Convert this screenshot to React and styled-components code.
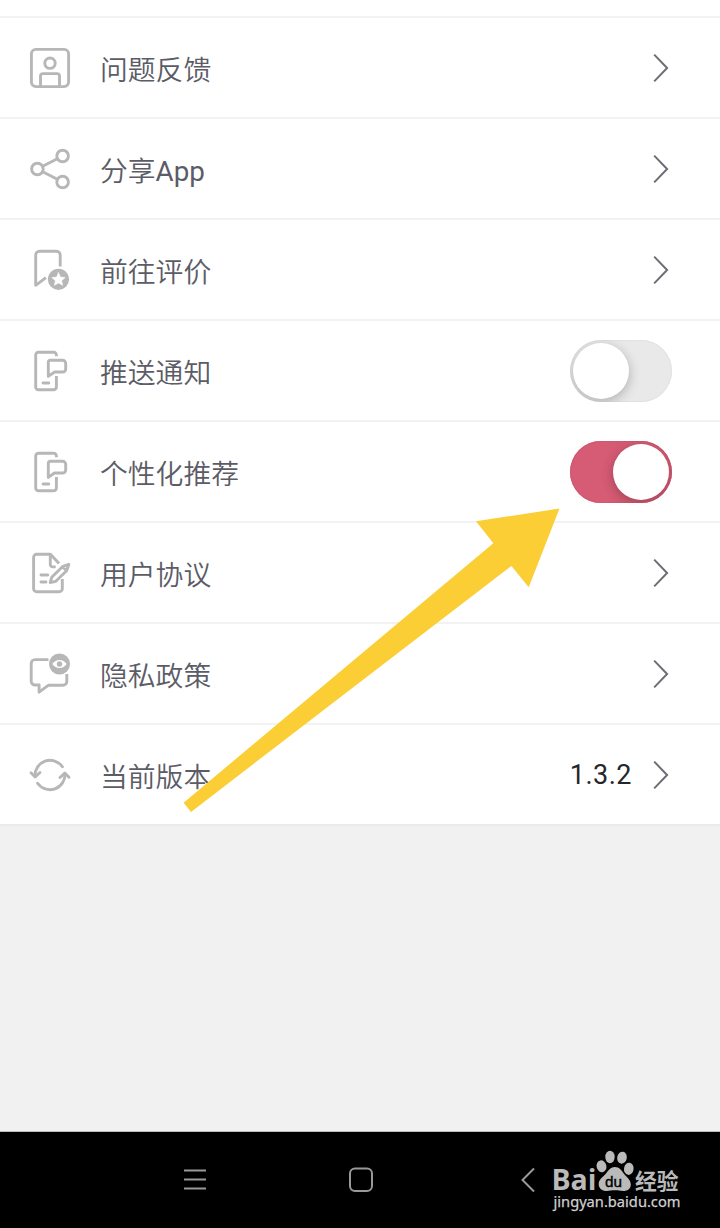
import React from "react";
import styled, { createGlobalStyle } from "styled-components";

const GlobalStyle = createGlobalStyle`
  body { margin: 0; background: #f1f1f1; }
  * { box-sizing: border-box; }
`;

const Screen = styled.div`
  position: relative;
  display: flex;
  flex-direction: column;
  width: 720px;
  height: 1228px;
  overflow: hidden;
  background: #f1f1f1;
  font-family: "Noto Sans CJK SC", sans-serif;
`;

const PreviousRow = styled.div`
  height: 18px;
  background: #fff;
  border-bottom: 2px solid #f2f2f2;
`;

const List = styled.main`
  display: flex;
  flex-direction: column;
`;

const Row = styled.div`
  display: flex;
  align-items: center;
  height: 101px;
  padding: 1px 48px 0 30px;
  background: #fff;
  border-bottom: 2px solid #f2f2f2;

  &:last-child {
    border-bottom-color: #ebebeb;
  }
`;

const RowIcon = styled.svg`
  width: 40px;
  height: 40px;
  overflow: visible;
  fill: none;
  stroke: #b7b7b7;
  stroke-width: 2.9;
  stroke-linecap: round;
  stroke-linejoin: round;
`;

const Label = styled.span`
  flex: 1;
  height: 40px;
  margin: 0 0 0 30px;
  font-size: 27.8px;
  line-height: 40px;
  font-weight: 350;
  color: #5b5c66;
`;

const Latin = styled.span`
  font-family: Roboto, sans-serif;
  font-weight: 400;
  line-height: 1;
`;

const Version = styled.span`
  margin-right: 21px;
  font: 400 27px/40px Roboto, sans-serif;
  letter-spacing: 0.5px;
  color: #25262b;
`;

const Chevron = styled.svg`
  width: 16px;
  height: 30px;
  margin: 0 3px 1px 0;
  fill: none;
  stroke: #6c6d75;
  stroke-width: 2;
`;

const Switch = styled.div`
  display: flex;
  align-items: center;
  justify-content: ${(p) => (p.$on ? "flex-end" : "flex-start")};
  width: 102px;
  height: 62px;
  padding: 0 3px;
  border-radius: 31px;
  overflow: hidden;
  background: ${(p) => (p.$on ? "#d65b74" : "#e9e9e9")};
  box-shadow: inset 0 0 0 1px ${(p) => (p.$on ? "#cf5870" : "#e2e2e2")};
`;

const Thumb = styled.div`
  width: 56px;
  height: 56px;
  border-radius: 50%;
  background: #fff;
  box-shadow: 0 3px 12px rgba(0, 0, 0, 0.26);
`;

const NavBar = styled.nav`
  display: flex;
  align-items: center;
  height: 97px;
  margin-top: auto;
  padding-left: 183px;
  border-top: 1px solid #b9bcbc;
  background: #000;
`;

const NavIcon = styled.svg`
  width: ${(p) => p.$w}px;
  height: 26px;
  margin-right: ${(p) => p.$gap || 0}px;
  fill: none;
  stroke: #999;
  stroke-width: 2;
`;

const Pointer = styled.svg`
  position: absolute;
  left: 183px;
  top: 508px;
  width: 378px;
  height: 305px;
  fill: #fbce35;
`;

const Watermark = styled.svg`
  position: absolute;
  left: 550px;
  top: 1148px;
  width: 134px;
  height: 68px;
  fill: #bababa;
`;

const PhoneIcon = () => (
  <RowIcon viewBox="0 0 40 40">
    <path d="M26.4 5.3V4a2.8 2.8 0 0 0-2.8-2.8H8.5A2.8 2.8 0 0 0 5.7 4v32a2.8 2.8 0 0 0 2.8 2.8h15.1a2.8 2.8 0 0 0 2.8-2.8V25" strokeLinecap="butt" />
    <path d="M20.200 9.300h12.500a3 3 0 0 1 3 3V18a3 3 0 0 1-3 3h-8.200l-6.200 4.400V11.200a1.900 1.900 0 0 1 1.900-1.900z" />
    <path d="M13 32h5.800" />
  </RowIcon>
);

const icons = {
  feedback: (
    <RowIcon viewBox="0 0 40 40">
      <rect x="1.4" y="1.4" width="37.2" height="37.2" rx="4.5" />
      <circle cx="20" cy="15.2" r="5.2" />
      <path d="M10.5 38V27.8a2.2 2.2 0 0 1 2.2-2.2h14.6a2.2 2.2 0 0 1 2.2 2.2V38" />
    </RowIcon>
  ),
  share: (
    <RowIcon viewBox="0 0 40 40">
      <circle cx="32.6" cy="7" r="5.8" />
      <circle cx="7.4" cy="20" r="5.8" />
      <circle cx="32.6" cy="33" r="5.8" />
      <path d="M12.7 17.3 27.3 9.7M12.7 22.7l14.6 7.6" />
    </RowIcon>
  ),
  rate: (
    <RowIcon viewBox="0 0 40 40">
      <path d="M30.2 16.5V5a3.8 3.8 0 0 0-3.8-3.8H9.5A3.8 3.8 0 0 0 5.7 5v30.3l10.2-7.6" strokeLinecap="butt" />
      <circle cx="28.5" cy="29.3" r="10.6" fill="#b7b7b7" stroke="none" />
      <path d="m28.5 22.8 1.9 4.3 4.7.5-3.5 3.1 1 4.6-4.1-2.4-4.1 2.4 1-4.6-3.5-3.1 4.7-.5z" fill="#fff" stroke="#fff" strokeWidth=".6" />
    </RowIcon>
  ),
  phone: <PhoneIcon />,
  agreement: (
    <RowIcon viewBox="0 0 40 40">
      <path d="M29 10.5 20.5 1.3H6.6a3 3 0 0 0-3 3v31.4a3 3 0 0 0 3 3h22.7a3 3 0 0 0 3-3V26" strokeLinecap="butt" />
      <path d="M20.3 2v9.5a2.4 2.4 0 0 0 2.4 2.4h3" strokeLinecap="butt" />
      <path d="m20.2 29.5 1.5-5.2 10.7-10.6 6.4-2.3-2.2 6.3L25.8 28.3zM32.4 13.7l4.2 4" />
      <path d="M11 22h6.8M11 29h5" />
    </RowIcon>
  ),
  privacy: (
    <RowIcon viewBox="0 0 40 40">
      <path d="M18.500 5.600H5A3.800 3.800 0 0 0 1.200 9.400v17.800A3.800 3.800 0 0 0 5 31h4.100v7.200l9.500-7H33a3.800 3.800 0 0 0 3.800-3.800v-7.500" strokeLinecap="butt" />
      <circle cx="29.5" cy="10" r="10.5" fill="#b7b7b7" stroke="none" />
      <path d="M22.3 10c3.7-5.2 10.7-5.2 14.4 0-3.7 5.2-10.7 5.2-14.4 0z" fill="#fff" stroke="none" />
      <circle cx="29.5" cy="10" r="2.7" fill="#b7b7b7" stroke="none" />
    </RowIcon>
  ),
  version: (
    <RowIcon viewBox="0 0 40 40">
      <path d="M32.4 11.8A15 15 0 0 0 5.1 21.4M7.6 28.2A15 15 0 0 0 34.9 18.6" />
      <path d="m1 17.7 4.2 4.2 4.8-4.4M39 22.3l-4.2-4.2-4.8 4.4" />
    </RowIcon>
  ),
};

const rows = [
  { icon: "feedback", label: "问题反馈" },
  { icon: "share", label: <>分享<Latin>App</Latin></> },
  { icon: "rate", label: "前往评价" },
  { icon: "phone", label: "推送通知", toggle: true, on: false },
  { icon: "phone", label: "个性化推荐", toggle: true, on: true },
  { icon: "agreement", label: "用户协议" },
  { icon: "privacy", label: "隐私政策" },
  { icon: "version", label: "当前版本", value: "1.3.2" },
];

export default function App() {
  return (
    <Screen>
      <GlobalStyle />
      <PreviousRow />
      <List>
        {rows.map((row, i) => (
          <Row key={i}>
            {icons[row.icon]}
            <Label>{row.label}</Label>
            {row.value && <Version>{row.value}</Version>}
            {row.toggle ? (
              <Switch $on={row.on} role="switch" aria-checked={row.on}>
                <Thumb />
              </Switch>
            ) : (
              <Chevron viewBox="0 0 16 30">
                <path d="m1.2 1.6 12.9 13.4L1.2 28.4" />
              </Chevron>
            )}
          </Row>
        ))}
      </List>
      <NavBar>
        <NavIcon $w={24} $gap={141} viewBox="0 0 24 26">
          <path d="M1 3.5h22M1 12.5h22M1 21.5h22" />
        </NavIcon>
        <NavIcon $w={26} $gap={146} viewBox="0 0 26 26">
          <rect x="2" y="1.5" width="22" height="22.5" rx="5" />
        </NavIcon>
        <NavIcon $w={16} viewBox="0 0 16 26">
          <path d="M14 1.5 2.5 13 14 24.5" />
        </NavIcon>
      </NavBar>
      <Pointer viewBox="183 508 378 305">
        <path d="M559.5 508.5 476 521.3l17.3 21.9L183.6 802.7l7.4 9.2 320.5-246 17.2 21.3z" />
      </Pointer>
      <Watermark viewBox="550 1148 134 68">
        <text x="551.5" y="1190" fontFamily="Open Sans, sans-serif" fontWeight="700" fontSize="28.5" textLength="45" lengthAdjust="spacingAndGlyphs">Bai</text>
        <ellipse cx="601.5" cy="1166.3" rx="4.9" ry="6" transform="rotate(-12 601.5 1166.3)" />
        <ellipse cx="610" cy="1157" rx="4.7" ry="6.2" />
        <ellipse cx="622" cy="1157.7" rx="4.8" ry="6" transform="rotate(12 622 1157.7)" />
        <ellipse cx="628.8" cy="1168.8" rx="4.8" ry="6.1" transform="rotate(8 628.8 1168.8)" />
        <path d="M615 1167c4 0 6.5 3 8.5 6.2 2.500 3.800 7.300 6 7.300 11.300 0 4.500-3.500 6.500-7.500 6.500-3 0-5.300-.7-8.300-.7s-5.300.7-8.300.7c-4.500 0-8-2.200-8-7 0-5 4.700-7.200 7.500-10.800 2.300-3 4.300-6.200 8.800-6.200z" />
        <text x="605" y="1187.3" fill="#000" fontFamily="Liberation Sans, sans-serif" fontSize="15.500" textLength="17" lengthAdjust="spacingAndGlyphs" stroke="#000" strokeWidth=".4">du</text>
        <text x="635" y="1188.5" fontFamily="Noto Sans CJK SC, sans-serif" fontWeight="700" fontSize="21.500" textLength="43.5" lengthAdjust="spacingAndGlyphs">经验</text>
        <text x="553.5" y="1207.3" fontFamily="Noto Sans, sans-serif" fontSize="14.5" fill="#d0d0d0" stroke="#d0d0d0" strokeWidth=".25" textLength="127" lengthAdjust="spacingAndGlyphs">jingyan.baidu.com</text>
      </Watermark>
    </Screen>
  );
}
